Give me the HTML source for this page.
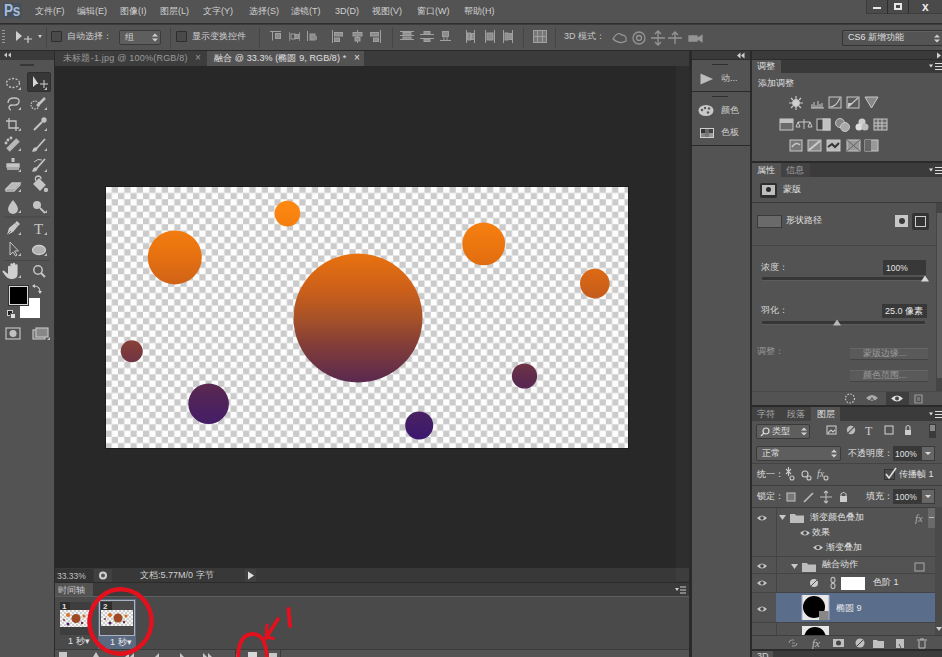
<!DOCTYPE html>
<html><head><meta charset="utf-8">
<style>
*{box-sizing:border-box;margin:0;padding:0}
html,body{width:942px;height:657px;overflow:hidden;background:#535353}
body{position:relative;font-family:"Liberation Sans",sans-serif;font-size:10px;color:#d0d0d0}
.a{position:absolute}
.t{position:absolute;white-space:nowrap;line-height:1}
</style></head><body>

<!-- MENU BAR -->
<div class="a" style="left:0;top:0;width:942px;height:24px;background:#535353"></div>
<div class="a" style="left:0;top:23px;width:942px;height:1px;background:#2e2e2e"></div><div class="a" style="left:0;top:24px;width:942px;height:1px;background:#3c3c3c"></div>

<!-- OPTIONS BAR -->
<div class="a" style="left:0;top:25px;width:942px;height:25px;background:#535353"></div>
<div class="a" style="left:0;top:50px;width:942px;height:1px;background:#2a2a2a"></div>

<!-- LEFT TOOLBAR -->
<div class="a" style="left:0;top:51px;width:54px;height:9px;background:#3a3a3a"></div>
<div class="a" style="left:0;top:60px;width:54px;height:597px;background:#535353"></div>
<div class="a" style="left:54px;top:51px;width:1px;height:606px;background:#2a2a2a"></div>

<!-- DOCUMENT AREA -->
<div class="a" style="left:55px;top:51px;width:634px;height:15px;background:#3b3b3b"></div>
<div class="a" style="left:55px;top:51px;width:152px;height:15px;background:#3d3d3d"></div>
<div class="a" style="left:207px;top:51px;width:157px;height:15px;background:#535353"></div>
<div class="a" style="left:55px;top:66px;width:634px;height:503px;background:#282828"></div>
<div class="a" style="left:676px;top:66px;width:13px;height:503px;background:#2e2e2e"></div>
<!-- status bar -->
<div class="a" style="left:55px;top:568px;width:634px;height:14px;background:#383838"></div>
<div class="a" style="left:55px;top:582px;width:634px;height:1px;background:#2a2a2a"></div>
<!-- timeline -->
<div class="a" style="left:55px;top:583px;width:634px;height:14px;background:#3b3b3b"></div>
<div class="a" style="left:55px;top:583px;width:38px;height:14px;background:#535353"></div>
<div class="a" style="left:55px;top:597px;width:634px;height:52px;background:#4a4a4a"></div>
<div class="a" style="left:55px;top:649px;width:634px;height:8px;background:#535353"></div>

<!-- separators -->
<div class="a" style="left:689px;top:51px;width:3px;height:606px;background:#2a2a2a"></div>
<div class="a" style="left:750px;top:51px;width:2px;height:606px;background:#2a2a2a"></div>

<!-- DOCK COLUMN -->
<div class="a" style="left:692px;top:51px;width:58px;height:8px;background:#3a3a3a"></div><div class="a" style="left:692px;top:59px;width:58px;height:1px;background:#2c2c2c"></div>
<div class="a" style="left:692px;top:60px;width:58px;height:597px;background:#535353"></div>
<div class="a" style="left:692px;top:91px;width:58px;height:1px;background:#2a2a2a"></div>
<div class="a" style="left:692px;top:145px;width:58px;height:1px;background:#2a2a2a"></div>

<!-- RIGHT PANELS -->
<div class="a" style="left:752px;top:51px;width:190px;height:8px;background:#3a3a3a"></div><div class="a" style="left:752px;top:59px;width:190px;height:1px;background:#2c2c2c"></div>
<!-- adjustments -->
<div class="a" style="left:752px;top:60px;width:190px;height:13px;background:#393939"></div><div class="a" style="left:781px;top:73px;width:161px;height:1px;background:#2e2e2e"></div>
<div class="a" style="left:752px;top:60px;width:29px;height:13px;background:#535353"></div>
<div class="a" style="left:752px;top:73px;width:190px;height:88px;background:#535353"></div>
<div class="a" style="left:752px;top:161px;width:190px;height:2px;background:#2a2a2a"></div>
<!-- properties -->
<div class="a" style="left:752px;top:163px;width:190px;height:14px;background:#3b3b3b"></div>
<div class="a" style="left:752px;top:163px;width:29px;height:14px;background:#535353"></div>
<div class="a" style="left:781px;top:163px;width:29px;height:14px;background:#424242"></div>
<div class="a" style="left:752px;top:177px;width:190px;height:228px;background:#535353"></div>
<div class="a" style="left:752px;top:202px;width:190px;height:1px;background:#3a3a3a"></div>
<div class="a" style="left:752px;top:405px;width:190px;height:2px;background:#2a2a2a"></div>
<!-- layers -->
<div class="a" style="left:752px;top:407px;width:190px;height:14px;background:#3b3b3b"></div>
<div class="a" style="left:752px;top:407px;width:29px;height:14px;background:#424242"></div>
<div class="a" style="left:781px;top:407px;width:30px;height:14px;background:#424242"></div>
<div class="a" style="left:811px;top:407px;width:29px;height:14px;background:#535353"></div>
<div class="a" style="left:752px;top:421px;width:190px;height:228px;background:#535353"></div>
<div class="a" style="left:752px;top:649px;width:190px;height:2px;background:#2a2a2a"></div>
<div class="a" style="left:752px;top:651px;width:190px;height:6px;background:#3b3b3b"></div>


<!-- MENU CONTENT -->
<div class="a" style="left:3px;top:3px;width:19px;height:15px;background:#46505a"></div>
<div class="t" style="left:4px;top:3px;font-size:16px;font-weight:bold;color:#a4bcdc;letter-spacing:-0.5px;transform:scaleX(0.85);transform-origin:0 0">Ps</div>
<div class="t" style="left:35px;top:7px;font-size:9px">文件(F)</div>
<div class="t" style="left:77px;top:7px;font-size:9px">编辑(E)</div>
<div class="t" style="left:120px;top:7px;font-size:9px">图像(I)</div>
<div class="t" style="left:160px;top:7px;font-size:9px">图层(L)</div>
<div class="t" style="left:203px;top:7px;font-size:9px">文字(Y)</div>
<div class="t" style="left:249px;top:7px;font-size:9px">选择(S)</div>
<div class="t" style="left:291px;top:7px;font-size:9px">滤镜(T)</div>
<div class="t" style="left:335px;top:7px;font-size:9px">3D(D)</div>
<div class="t" style="left:372px;top:7px;font-size:9px">视图(V)</div>
<div class="t" style="left:417px;top:7px;font-size:9px">窗口(W)</div>
<div class="t" style="left:464px;top:7px;font-size:9px">帮助(H)</div>
<!-- window buttons -->
<div class="a" style="left:866px;top:0;width:76px;height:14px;background:#4a4a4a;border-left:1px solid #3a3a3a;border-bottom:1px solid #3e3e3e"></div>
<div class="a" style="left:887px;top:0;width:1px;height:14px;background:#2e2e2e"></div>
<div class="a" style="left:908px;top:0;width:1px;height:14px;background:#2e2e2e"></div>
<div class="a" style="left:873px;top:7px;width:8px;height:2px;background:#e8e8e8"></div>
<div class="a" style="left:894px;top:3px;width:8px;height:7px;border:2px solid #e8e8e8"></div>
<div class="t" style="left:922px;top:1px;font-size:12px;font-weight:bold;color:#e8e8e8">x</div>

<!-- OPTIONS CONTENT -->
<div class="a" style="left:2px;top:30px;width:3px;height:15px;background:repeating-linear-gradient(#9a9a9a 0 1px,transparent 1px 3px)"></div>
<svg class="a" style="left:14px;top:29px" width="30" height="16"><path d="M2 2 L2 12 L8 7 Z" fill="#cfcfcf"/><path d="M10 10 h8 M14 7 v7" stroke="#cfcfcf" stroke-width="1.2"/><path d="M24 6 l4 0 l-2 3 z" fill="#cfcfcf"/></svg>
<div class="a" style="left:46px;top:27px;width:1px;height:21px;background:#454545"></div>
<div class="a" style="left:51px;top:31px;width:11px;height:11px;background:#4a4a4a;border:1px solid #2e2e2e;border-radius:1px"></div>
<div class="t" style="left:67px;top:32px;font-size:9px">自动选择：</div>
<div class="a" style="left:119px;top:30px;width:42px;height:15px;background:#5e5e5e;border:1px solid #3a3a3a;border-radius:2px"></div>
<div class="t" style="left:125px;top:33px;font-size:9px">组</div>
<svg class="a" style="left:152px;top:33px" width="6" height="9"><path d="M0 3.5 L3 0.5 L6 3.5Z M0 5.5 L3 8.5 L6 5.5Z" fill="#d0d0d0"/></svg>
<div class="a" style="left:170px;top:27px;width:1px;height:21px;background:#454545"></div>
<div class="a" style="left:176px;top:31px;width:11px;height:11px;background:#4a4a4a;border:1px solid #2e2e2e;border-radius:1px"></div>
<div class="t" style="left:192px;top:32px;font-size:9px">显示变换控件</div>
<div class="a" style="left:259px;top:27px;width:1px;height:21px;background:#454545"></div>
<svg class="a" style="left:0;top:25px" width="560" height="24" stroke="#a0a0a0" fill="#8c8c8c" stroke-width="1">
<!-- align top/vcenter/bottom -->
<path d="M270 6.5 h11 M272.5 6.5 v9"/><rect x="275.5" y="8.5" width="5" height="5"/>
<path d="M289.5 7 v9 M299.5 7 v9" stroke="#888"/><rect x="291" y="9" width="4" height="5" fill="none"/><rect x="295" y="9.5" width="4" height="4"/>
<path d="M307.5 6 v10"/><rect x="310" y="9" width="5" height="6"/><rect x="314" y="11" width="3" height="4" stroke="none"/>
<!-- align left/hcenter/right -->
<path d="M332.5 5 v13"/><rect x="334.5" y="7.5" width="8" height="3.5"/><rect x="334.5" y="13" width="5" height="3.5"/>
<path d="M357.5 5 v13"/><rect x="353" y="7.5" width="9" height="3.5"/><rect x="355" y="12.5" width="5" height="3.5"/>
<path d="M380.5 5 v13"/><rect x="370.5" y="7.5" width="8" height="3.5"/><rect x="373.5" y="13" width="5" height="3.5"/>
<!-- distribute top/vcenter/bottom -->
<path d="M400 6.5 h14 M400 10.5 h14 M400 14.5 h14"/><rect x="403" y="7.5" width="8" height="2.5"/><rect x="403" y="12" width="8" height="2.5"/>
<path d="M420 9.5 h14 M420 13.5 h14"/><rect x="424" y="6.5" width="6" height="2.5"/><rect x="424" y="14" width="6" height="2.5"/>
<path d="M440 15.5 h11"/><rect x="442.5" y="6.5" width="6" height="5"/><path d="M444 12 v3 M447 12 v3"/>
<!-- distribute left/hcenter/right -->
<path d="M466.5 5 v13 M474.5 5 v13"/><rect x="467.5" y="8" width="3" height="7"/><rect x="471.5" y="8.5" width="3" height="6"/>
<path d="M485.5 5 v13 M494.5 5 v13"/><rect x="487" y="8" width="6" height="7"/>
<path d="M503.5 5 v13 M512.5 5 v13"/><rect x="505" y="8" width="3" height="7"/><rect x="509" y="8.5" width="3" height="6"/>
<!-- auto align -->
<rect x="533.5" y="5.5" width="13" height="12" fill="#777"/><path d="M537.5 5 v13 M542.5 5 v13 M533 11.5 h14"/>
</svg>
<div class="a" style="left:392px;top:27px;width:1px;height:21px;background:#454545"></div>
<div class="a" style="left:523px;top:27px;width:1px;height:21px;background:#454545"></div>
<div class="a" style="left:555px;top:27px;width:1px;height:21px;background:#454545"></div>
<div class="t" style="left:564px;top:32px;font-size:9px;color:#c8c8c8">3D 模式：</div>
<svg class="a" style="left:610px;top:29px" width="96" height="18" stroke="#959595" fill="none" stroke-width="1.3">
<path d="M3 10 q4 -8 9 -4 q5 0 4 6 q-6 4 -13 -2z"/>
<circle cx="29" cy="9" r="6"/><circle cx="29" cy="9" r="2.5"/>
<path d="M48 2 v14 M41 9 h14 M45 5 l3 -3 l3 3 M45 13 l3 3 l3 -3"/>
<path d="M58 9 h14 M65 3 v12 M62 6 l3 -3 l3 3"/>
<path d="M79 7 h8 v5 h-8z M87 9.5 l5 -3 v6z" fill="#959595"/>
</svg>
<div class="a" style="left:842px;top:30px;width:100px;height:16px;background:#545454;border:1px solid #333;border-right:none;border-radius:2px 0 0 2px;box-shadow:inset 0 1px 0 #606060"></div>
<div class="t" style="left:848px;top:33px;font-size:9px;color:#e0e0e0">CS6 新增功能</div>
<svg class="a" style="left:934px;top:34px" width="6" height="9"><path d="M0 3.5 L3 0.5 L6 3.5Z M0 5.5 L3 8.5 L6 5.5Z" fill="#d0d0d0"/></svg>

<!-- TABS -->
<div class="t" style="left:63px;top:54px;font-size:9px;color:#9a9a9a;letter-spacing:0.22px">未标题-1.jpg @ 100%(RGB/8)</div>
<div class="t" style="left:195px;top:53px;font-size:10px;color:#9a9a9a">×</div>
<div class="t" style="left:214px;top:54px;font-size:9px;color:#e0e0e0;letter-spacing:0.1px">融合 @ 33.3% (椭圆 9, RGB/8) *</div>
<div class="t" style="left:354px;top:53px;font-size:10px;color:#e0e0e0">×</div>


<!-- TOOLBAR CONTENT -->
<svg class="a" style="left:0;top:51px" width="54" height="300">
<g fill="#c9c9c9"><path d="M4 4 l3 -2.5 v5z M8 4 l3 -2.5 v5z"/></g>
<path d="M20 14 h14" stroke="#2e2e2e" stroke-width="1.5"/>
<path d="M0 1 h54" stroke="#3a3a3a"/>
</svg>
<div class="a" style="left:27px;top:72px;width:24px;height:20px;background:#383838;border:1px solid #2e2e2e;border-radius:2px"></div>
<svg class="a" style="left:0;top:0" width="54" height="350" fill="none" stroke="#c4c4c4" stroke-width="1.3">
<!-- marquee -->
<ellipse cx="13" cy="83" rx="6.5" ry="4.5" stroke-dasharray="2 1.5"/>
<!-- move -->
<path d="M33 76 v11 l3.5 -3 l2 0 z" fill="#d8d8d8" stroke="none"/>
<path d="M40 84 h8 M44 80 v8" stroke="#d0d0d0" stroke-width="1"/>
<!-- lasso -->
<path d="M8 103 q0 -5 6 -5 q6 0 5 4 q-1 4 -7 3 q-3 0 -3 3 q1 2 2 2"/>
<!-- quick select -->
<circle cx="35" cy="105" r="4" stroke-dasharray="1.5 1.2"/>
<path d="M37 106 l8 -8" stroke-width="2.5"/>
<!-- crop -->
<path d="M9 118 v10 h10 M6 121 h10 v10"/>
<!-- eyedropper -->
<path d="M34 130 l8 -8" stroke-width="2"/><circle cx="44" cy="120" r="2" fill="#c4c4c4"/>
<!-- heal -->
<path d="M8 150 l10 -10" stroke-width="5" stroke="#b8b8b8"/>
<circle cx="8" cy="140" r="0.8" fill="#c4c4c4"/><circle cx="6" cy="143" r="0.8" fill="#c4c4c4"/><circle cx="11" cy="138" r="0.8" fill="#c4c4c4"/>
<!-- brush -->
<path d="M37 148 l8 -9" stroke-width="1.8"/><path d="M33 151 q1 -4 4 -3 q0 3 -4 3z" fill="#c4c4c4"/>
<!-- stamp -->
<path d="M13 158 v4" stroke-width="3"/><path d="M7 164 h12 v3 h-12z M7 169 h12" fill="#c4c4c4"/>
<!-- history brush -->
<path d="M37 168 l8 -9" stroke-width="1.8"/><path d="M33 171 q1 -4 4 -3 q0 3 -4 3z" fill="#c4c4c4"/><path d="M34 162 q4 -4 8 -2" stroke-width="1"/>
<!-- eraser -->
<path d="M6 189 l6 -6 h8 l-6 6z" fill="#b8b8b8"/><path d="M6 189 v2 h8 l6 -6 v-2"/>
<!-- bucket -->
<path d="M34 184 l5 -5 l6 6 l-5 5z" fill="#c4c4c4"/><path d="M36 181 q-2 -4 2 -5 q3 0 3 3"/><circle cx="46" cy="190" r="1.5" fill="#c4c4c4"/>
<!-- blur drop -->
<path d="M13 200 q-5 6 -5 9 a5 5 0 0 0 10 0 q0 -3 -5 -9z" fill="#c4c4c4" stroke="none"/>
<!-- dodge -->
<circle cx="37" cy="205" r="4" fill="#c4c4c4" stroke="none"/><path d="M40 208 l5 5" stroke-width="1.8"/>
<path d="M4 217 h46" stroke="#474747" stroke-width="1"/>
<!-- pen -->
<path d="M7 235 l2 -7 l6 -5 l3 3 l-5 6z" fill="#c8c8c8" stroke="none"/><path d="M7 235 l4 -4" stroke="#555" stroke-width="0.8"/><path d="M15 223 l2 -2 l3 3 l-2 2z" fill="#c8c8c8" stroke="none"/>
<!-- type -->
<text x="34" y="234" font-family="Liberation Serif" font-size="15" fill="#c8c8c8" stroke="none">T</text>
<!-- path select -->
<path d="M10 242 v13 l3 -3 l2.5 4 l1.5 -1 l-2.5 -4 l4 0 z" stroke-width="1"/>
<!-- ellipse shape -->
<ellipse cx="39" cy="250" rx="6.5" ry="4.5" fill="#b0b0b0" stroke="#cfcfcf"/>
<path d="M4 260.5 h46" stroke="#474747" stroke-width="1"/>
<!-- hand -->
<path d="M8 274 v-7 q0 -1.2 1.2 -1.2 q1.2 0 1.2 1.2 v4 v-6.5 q0 -1.2 1.2 -1.2 q1.2 0 1.2 1.2 v6.5 v-7 q0 -1.2 1.2 -1.2 q1.2 0 1.2 1.2 v7 v-5.5 q0 -1.2 1.2 -1.2 q1.2 0 1.2 1.2 v8 q0 5 -5 5.5 h-2 q-3 0 -5 -3 l-3 -4 q-0.5 -1.2 0.8 -1.6 q1 0 2 1.5z" fill="#d0d0d0" stroke="none"/>
<!-- zoom -->
<circle cx="38" cy="270" r="4.2" stroke-width="1.5"/><path d="M41 273 l4 4" stroke-width="2"/>
</svg>
<svg class="a" style="left:0;top:0" width="54" height="350" fill="#bdbdbd">
<path d="M18 90 l3 0 l0 -3z M44 90 l3 0 l0 -3z M18 110 l3 0 l0 -3z M44 110 l3 0 l0 -3z M18 131 l3 0 l0 -3z M44 131 l3 0 l0 -3z M18 151 l3 0 l0 -3z M44 151 l3 0 l0 -3z M18 172 l3 0 l0 -3z M44 172 l3 0 l0 -3z M18 192 l3 0 l0 -3z M44 192 l3 0 l0 -3z M18 213 l3 0 l0 -3z M44 213 l3 0 l0 -3z M18 235 l3 0 l0 -3z M44 235 l3 0 l0 -3z M18 256 l3 0 l0 -3z M44 256 l3 0 l0 -3z M18 278 l3 0 l0 -3z"/>
</svg>
<!-- colors -->
<div class="a" style="left:20px;top:298px;width:20px;height:20px;background:#fff;"></div>
<div class="a" style="left:9px;top:286px;width:19px;height:19px;background:#000;border:1px solid #d8d8d8;box-shadow:0 0 0 1px #333"></div>
<svg class="a" style="left:32px;top:283px" width="12" height="12" stroke="#cfcfcf" fill="none" stroke-width="1.2"><path d="M2 3 q6 0 6 6"/><path d="M0 3 l3 -2 v4z M8 11 l-2 -3 h4z" fill="#cfcfcf" stroke="none"/></svg>
<svg class="a" style="left:7px;top:310px" width="10" height="10"><rect x="0.5" y="0.5" width="5" height="5" fill="#222" stroke="#ccc" stroke-width="1"/><rect x="3.5" y="3.5" width="5" height="5" fill="#ddd" stroke="#555"/></svg>
<svg class="a" style="left:4px;top:326px" width="48" height="16" stroke="#c0c0c0" fill="none" stroke-width="1.2">
<rect x="2" y="2" width="14" height="11"/><circle cx="9" cy="7.5" r="3" fill="#c0c0c0"/>
<rect x="29" y="4" width="12" height="9" fill="#777"/><rect x="32" y="2" width="12" height="9" fill="#888"/>
<path d="M43 14 l3 0 l0 -3z" fill="#bdbdbd" stroke="none"/>
</svg>


<!-- STATUS BAR CONTENT -->
<div class="a" style="left:55px;top:569px;width:38px;height:13px;background:#333"></div>
<div class="t" style="left:57px;top:572px;font-size:8.5px;color:#c0c0c0">33.33%</div>
<div class="a" style="left:94px;top:569px;width:18px;height:13px;background:#404040"></div>
<svg class="a" style="left:97px;top:570px" width="12" height="11"><circle cx="6" cy="5.5" r="4" fill="#cfcfcf"/><circle cx="6" cy="5.5" r="2" fill="#555"/></svg>
<div class="t" style="left:140px;top:571px;font-size:9px;color:#d0d0d0">文档:5.77M/0 字节</div>
<div class="a" style="left:245px;top:569px;width:11px;height:13px;background:#404040"></div>
<svg class="a" style="left:247px;top:571px" width="8" height="9"><path d="M1 0.5 L7 4.5 L1 8.5Z" fill="#e0e0e0"/></svg>
<div class="a" style="left:676px;top:568px;width:13px;height:13px;background:#3d3d3d"></div>

<!-- TIMELINE CONTENT -->
<div class="t" style="left:58px;top:586px;font-size:9px;color:#c8c8c8">时间轴</div>
<div class="a" style="left:55px;top:596px;width:634px;height:1px;background:#5e5e5e"></div>
<svg class="a" style="left:674px;top:585px" width="14" height="10"><path d="M1 3 h4 l-2 3z" fill="#ccc"/><path d="M6 2 h6 M6 5 h6 M6 8 h6" stroke="#ccc" stroke-width="1"/></svg>
<!-- frame 1 -->
<div class="a" style="left:60px;top:602px;width:31px;height:33px;background:#3e3e3e"></div>
<div class="a" style="left:60px;top:602px;width:10px;height:8px;background:#2e2e2e"></div>
<div class="t" style="left:62px;top:603px;font-size:8px;font-weight:bold;color:#e0e0e0">1</div>
<div class="a" style="left:60px;top:610px;width:31px;height:17px;background:repeating-conic-gradient(#cfcfcf 0 25%,#f4f4f4 0 50%) 0 0/4px 4px"></div>
<svg class="a" style="left:60px;top:610px" width="31" height="17"><circle cx="16" cy="8.5" r="4.5" fill="#a04a24"/><circle cx="8" cy="5" r="2" fill="#d87020"/><circle cx="24" cy="6" r="1.5" fill="#d87020"/><circle cx="8" cy="14" r="1.5" fill="#4a2060"/><circle cx="22" cy="13" r="1.2" fill="#6a2a48"/><circle cx="4" cy="10" r="1" fill="#803838"/></svg>
<div class="t" style="left:68px;top:637px;font-size:9px;color:#e0e0e0">1 秒▾</div>
<!-- frame 2 -->
<div class="a" style="left:98px;top:599px;width:38px;height:50px;background:#5a6880"></div>
<div class="a" style="left:99px;top:600px;width:36px;height:36px;background:#4a4a4a;border:1px solid #a8b4c4"></div>
<div class="a" style="left:101px;top:602px;width:11px;height:8px;background:#2e2e2e"></div>
<div class="t" style="left:103px;top:603px;font-size:8px;font-weight:bold;color:#e0e0e0">2</div>
<div class="a" style="left:101px;top:610px;width:32px;height:16px;background:repeating-conic-gradient(#cfcfcf 0 25%,#f4f4f4 0 50%) 0 0/4px 4px"></div>
<svg class="a" style="left:101px;top:610px" width="32" height="16"><circle cx="17" cy="8" r="4.5" fill="#a04a24"/><circle cx="9" cy="5" r="2" fill="#d87020"/><circle cx="25" cy="6" r="1.5" fill="#d87020"/><circle cx="9" cy="13" r="1.5" fill="#4a2060"/><circle cx="23" cy="12" r="1.2" fill="#6a2a48"/><circle cx="4" cy="9" r="1" fill="#803838"/></svg>
<div class="t" style="left:110px;top:638px;font-size:9px;color:#e8e8e8">1 秒▾</div>
<!-- timeline bottom toolbar -->
<div class="a" style="left:55px;top:649px;width:634px;height:1px;background:#3a3a3a"></div>
<svg class="a" style="left:55px;top:649px" width="300" height="8" fill="#c8c8c8">
<rect x="4" y="3" width="8" height="5"/>
<path d="M38 8 l3 -5 l3 5z"/>
<path d="M70 8 l4 -4 v4z M75 8 l4 -4 v4z"/>
<path d="M100 8 l4 -4 v4z"/>
<path d="M125 4 l4 4 h-4z"/>
<path d="M148 4 l4 4 h-4z M153 4 l4 4 h-4z"/>
<path d="M180 4 l4 4 h-4z"/>
<rect x="193" y="3" width="9" height="5" fill="#d8d8d8"/>
<rect x="214" y="4" width="8" height="4"/>
</svg>
<div class="a" style="left:235px;top:650px;width:1px;height:7px;background:#3a3a3a"></div>
<div class="a" style="left:280px;top:650px;width:1px;height:7px;background:#3a3a3a"></div>

<!-- DOCK CONTENT -->
<div class="a" style="left:712px;top:64px;width:16px;height:1px;background:#2e2e2e"></div>
<svg class="a" style="left:700px;top:73px" width="14" height="12"><path d="M0.5 0.5 L13 6 L0.5 11.5Z" fill="#bdbdbd"/></svg>
<div class="t" style="left:721px;top:74px;font-size:9px">动...</div>
<div class="a" style="left:712px;top:96px;width:16px;height:1px;background:#2e2e2e"></div>
<svg class="a" style="left:698px;top:104px" width="16" height="13"><ellipse cx="8" cy="6.5" rx="7.5" ry="5.5" fill="#c8c8c8"/><circle cx="4" cy="6" r="1.2" fill="#555"/><circle cx="7" cy="4" r="1.2" fill="#555"/><circle cx="11" cy="4.5" r="1.2" fill="#555"/><circle cx="10" cy="8.5" r="1.2" fill="#555"/></svg>
<div class="t" style="left:721px;top:106px;font-size:9px">颜色</div>
<svg class="a" style="left:700px;top:128px" width="14" height="10"><rect x="0" y="0" width="14" height="10" fill="#cfcfcf"/><rect x="1" y="1" width="4" height="4" fill="#333"/><rect x="5" y="1" width="4" height="4" fill="#666"/><rect x="9" y="1" width="4" height="4" fill="#444"/><rect x="1" y="5" width="4" height="4" fill="#888"/><rect x="5" y="5" width="4" height="4" fill="#777"/><rect x="9" y="5" width="4" height="4" fill="#999"/></svg>
<div class="t" style="left:721px;top:128px;font-size:9px">色板</div>
<svg class="a" style="left:737px;top:52px" width="10" height="7" fill="#d0d0d0"><path d="M0 3.5 l3.5 -3 v6z M4 3.5 l3.5 -3 v6z"/></svg>
<svg class="a" style="left:935px;top:52px" width="7" height="7" fill="#d0d0d0"><path d="M2 0.5 l4 3 l-4 3z"/></svg>


<!-- ADJUSTMENTS CONTENT -->
<div class="t" style="left:757px;top:62px;font-size:9px;color:#e0e0e0">调整</div>
<svg class="a" style="left:929px;top:62px" width="13" height="9"><path d="M0 2.5 h4 l-2 3z" fill="#ddd"/><path d="M6 1.5 h7 M6 4.5 h7 M6 7.5 h7" stroke="#ddd" stroke-width="1"/></svg>
<div class="t" style="left:758px;top:79px;font-size:9px;color:#e0e0e0">添加调整</div>
<svg class="a" style="left:752px;top:73px" width="190" height="88" stroke="#c8c8c8" fill="none" stroke-width="1">
<!-- row1 y~30 -->
<circle cx="44" cy="30" r="3.5" fill="#d0d0d0"/><path d="M44 23 v3 M44 34 v3 M37 30 h3 M48 30 h3 M39 25 l2 2 M47 33 l2 2 M49 25 l-2 2 M39 35 l2 -2" stroke-width="1.2"/>
<path d="M59 35 h13 M60 35 v-4 M62 35 v-6 M64 35 v-3 M66 35 v-7 M68 35 v-4 M70 35 v-5" stroke="#c8c8c8"/>
<rect x="77" y="24" width="12" height="11" fill="#5a5a5a"/><path d="M78 34 q6 0 10 -9" stroke-width="1.2"/>
<rect x="95" y="24" width="12" height="11" fill="#5a5a5a"/><path d="M96 34 l10 -9" stroke-width="1.2"/><path d="M96 35 l0 -5 l5 0z" fill="#c8c8c8" stroke="none"/>
<path d="M113 24 h13 l-6.5 11z" fill="#888"/>
<!-- row2 y~52 -->
<rect x="28" y="46" width="13" height="11" fill="#6a6a6a"/><rect x="28" y="46" width="13" height="4" fill="#c0c0c0" stroke="none"/>
<path d="M52 46 v10 M46 49 h12 M46 49 l-2 5 h4z M58 49 l-2 5 h4z" stroke-width="1"/>
<rect x="65" y="46" width="13" height="11" fill="#444"/><rect x="71" y="46" width="7" height="11" fill="#c0c0c0"/>
<circle cx="88" cy="50" r="4.5" fill="#888"/><circle cx="93" cy="54" r="4.5" fill="#aaa"/>
<circle cx="110" cy="49" r="3.5" fill="#ccc" stroke="none"/><circle cx="107" cy="54" r="3.5" fill="#ddd" stroke="none"/><circle cx="113" cy="54" r="3.5" fill="#bbb" stroke="none"/>
<rect x="122" y="46" width="13" height="11" fill="#6a6a6a"/><path d="M122 50 h13 M122 53 h13 M126 46 v11 M130 46 v11"/>
<!-- row3 y~72 -->
<rect x="38" y="67" width="12" height="11" fill="#777"/><path d="M40 74 q4 -6 8 -2" stroke-width="1.5"/>
<rect x="56" y="67" width="13" height="11" fill="#888"/><path d="M57 77 l11 -9" stroke="#ccc" stroke-width="2"/>
<rect x="75" y="67" width="13" height="11" fill="#bbb"/><path d="M76 74 l4 -3 l3 3 l4 -4" stroke="#333" stroke-width="2"/>
<rect x="95" y="67" width="13" height="11" fill="#999"/><path d="M95 67 l13 11 M108 67 l-13 11" stroke="#666"/>
<rect x="113" y="67" width="13" height="11" fill="#999"/><rect x="113" y="67" width="6" height="11" fill="#666" stroke="none"/>
</svg>

<!-- PROPERTIES CONTENT -->
<div class="t" style="left:757px;top:166px;font-size:9px;color:#e0e0e0">属性</div>
<div class="t" style="left:786px;top:166px;font-size:9px;color:#a8a8a8">信息</div>
<svg class="a" style="left:929px;top:166px" width="13" height="9"><path d="M0 2.5 h4 l-2 3z" fill="#ddd"/><path d="M6 1.5 h7 M6 4.5 h7 M6 7.5 h7" stroke="#ddd" stroke-width="1"/></svg>
<div class="a" style="left:760px;top:183px;width:17px;height:15px;background:#2e2e2e;border-radius:2px"></div>
<div class="a" style="left:762px;top:185px;width:13px;height:10px;background:#bdbdbd"></div>
<div class="a" style="left:766px;top:187px;width:5px;height:5px;background:#2a2a2a;border-radius:50%"></div>
<div class="t" style="left:783px;top:185px;font-size:9px;color:#e0e0e0">蒙版</div>
<div class="a" style="left:757px;top:215px;width:25px;height:13px;background:#6a6a6a;border:1px solid #3a3a3a"></div>
<div class="t" style="left:786px;top:216px;font-size:9px;color:#e0e0e0">形状路径</div>
<div class="a" style="left:895px;top:215px;width:13px;height:12px;background:#c8c8c8"></div>
<div class="a" style="left:899px;top:218px;width:6px;height:6px;background:#3a3a3a;border-radius:50%"></div>
<div class="a" style="left:912px;top:213px;width:17px;height:17px;background:#333;border-radius:2px"></div>
<div class="a" style="left:915px;top:216px;width:11px;height:11px;border:1px solid #ccc"></div>
<div class="a" style="left:752px;top:245px;width:184px;height:1px;background:#464646"></div>
<div class="a" style="left:936px;top:203px;width:6px;height:188px;background:#454545"></div>
<div class="a" style="left:937px;top:213px;width:5px;height:165px;background:#5e5e5e"></div>
<div class="t" style="left:761px;top:263px;font-size:9px;color:#d8d8d8">浓度：</div>
<div class="a" style="left:883px;top:260px;width:43px;height:15px;background:#383838"></div>
<div class="t" style="left:886px;top:264px;font-size:8.5px;color:#e0e0e0">100%</div>
<div class="a" style="left:762px;top:277px;width:163px;height:3px;background:#363636;border-radius:1px"></div><div class="a" style="left:762px;top:280px;width:163px;height:1px;background:#5c5c5c"></div>
<svg class="a" style="left:920px;top:275px" width="10" height="7"><path d="M1 6.5 L5 0.5 L9 6.5Z" fill="#d8d8d8"/></svg>
<div class="t" style="left:761px;top:306px;font-size:9px;color:#d8d8d8">羽化：</div>
<div class="a" style="left:882px;top:304px;width:45px;height:14px;background:#383838"></div>
<div class="t" style="left:885px;top:307px;font-size:9px;color:#e8e8e8">25.0 像素</div>
<div class="a" style="left:762px;top:321px;width:163px;height:3px;background:#363636;border-radius:1px"></div><div class="a" style="left:762px;top:324px;width:163px;height:1px;background:#5c5c5c"></div>
<svg class="a" style="left:832px;top:319px" width="10" height="7"><path d="M1 6.5 L5 0.5 L9 6.5Z" fill="#b8b8b8"/></svg>
<div class="t" style="left:757px;top:347px;font-size:9px;color:#9a9a9a">调整：</div>
<div class="a" style="left:850px;top:348px;width:78px;height:12px;background:#5a5a5a;border-top:1px solid #666;border-bottom:1px solid #444"></div>
<div class="t" style="left:863px;top:349px;font-size:9px;color:#9c9c9c">蒙版边缘...</div>
<div class="a" style="left:850px;top:370px;width:78px;height:12px;background:#5a5a5a;border-top:1px solid #666;border-bottom:1px solid #444"></div>
<div class="t" style="left:863px;top:371px;font-size:9px;color:#9c9c9c">颜色范围...</div>
<div class="a" style="left:752px;top:391px;width:190px;height:1px;background:#4a4a4a"></div>
<div class="a" style="left:886px;top:392px;width:23px;height:13px;background:#3e3e3e"></div>
<svg class="a" style="left:752px;top:392px" width="190" height="13" fill="none" stroke="#c8c8c8" stroke-width="1.2">
<circle cx="98" cy="6.5" r="4.5" stroke-dasharray="1.5 1.5"/>
<path d="M114 6 q6 -6 12 0 q-6 6 -12 0z" fill="#aaa" stroke="none"/><path d="M118 9 l2 -3 l2 3" stroke="#555"/>
<path d="M139 6.5 q6 -6 12 0 q-6 6 -12 0z" fill="#ddd" stroke="none"/><circle cx="145" cy="6.5" r="2" fill="#444" stroke="none"/>
<path d="M163 3 h7 v8 h-7z M165 6 h3 M165 8 h3" stroke="#999"/>
</svg>

<!-- LAYERS CONTENT -->
<div class="t" style="left:757px;top:410px;font-size:9px;color:#a8a8a8">字符</div>
<div class="t" style="left:787px;top:410px;font-size:9px;color:#a8a8a8">段落</div>
<div class="t" style="left:817px;top:410px;font-size:9px;color:#e0e0e0">图层</div>
<svg class="a" style="left:929px;top:410px" width="13" height="9"><path d="M0 2.5 h4 l-2 3z" fill="#ddd"/><path d="M6 1.5 h7 M6 4.5 h7 M6 7.5 h7" stroke="#ddd" stroke-width="1"/></svg>
<div class="a" style="left:756px;top:424px;width:54px;height:15px;background:#5e5e5e;border:1px solid #3a3a3a;border-radius:2px"></div>
<svg class="a" style="left:760px;top:427px" width="10" height="10" stroke="#ddd" fill="none" stroke-width="1.2"><circle cx="6" cy="4" r="3"/><path d="M4 6 l-3 3"/></svg>
<div class="t" style="left:772px;top:427px;font-size:9px;color:#e0e0e0">类型</div>
<svg class="a" style="left:801px;top:427px" width="6" height="9"><path d="M0 3.5 L3 0.5 L6 3.5Z M0 5.5 L3 8.5 L6 5.5Z" fill="#d0d0d0"/></svg>
<svg class="a" style="left:752px;top:421px" width="190" height="20" stroke="#c8c8c8" fill="none" stroke-width="1.1">
<rect x="75" y="5" width="9" height="8"/><path d="M76 12 l3 -3 l2 2 l2 -2" />
<circle cx="99" cy="9" r="4.2" fill="#bbb" stroke="none"/><path d="M96 12 l6 -6" stroke="#555"/>
<text x="113" y="14" font-family="Liberation Serif" font-size="12" fill="#d0d0d0" stroke="none">T</text>
<rect x="133" y="5" width="8" height="8"/>
<path d="M153 14 v-5 h6 v5z" fill="#ccc" stroke="none"/><path d="M154 9 v-3 q2 -3 4 0 v3"/>
<rect x="177" y="3" width="7" height="14" fill="#3a3a3a" stroke="none"/><rect x="178" y="4" width="5" height="6" fill="#888" stroke="none"/>
</svg>
<div class="a" style="left:756px;top:446px;width:85px;height:15px;background:#5e5e5e;border:1px solid #3a3a3a;border-radius:2px"></div>
<div class="t" style="left:762px;top:449px;font-size:9px;color:#e0e0e0">正常</div>
<svg class="a" style="left:831px;top:449px" width="6" height="9"><path d="M0 3.5 L3 0.5 L6 3.5Z M0 5.5 L3 8.5 L6 5.5Z" fill="#d0d0d0"/></svg>
<div class="t" style="left:848px;top:449px;font-size:9px;color:#e0e0e0">不透明度：</div>
<div class="a" style="left:893px;top:446px;width:28px;height:15px;background:#383838"></div>
<div class="t" style="left:895px;top:450px;font-size:8.5px;color:#e0e0e0">100%</div>
<div class="a" style="left:921px;top:446px;width:14px;height:15px;background:#666;border:1px solid #3a3a3a"></div>
<svg class="a" style="left:925px;top:452px" width="6" height="4"><path d="M0 0 h6 l-3 3z" fill="#ddd"/></svg>
<div class="t" style="left:757px;top:470px;font-size:9px;color:#e0e0e0">统一：</div>
<svg class="a" style="left:783px;top:466px" width="50" height="16" stroke="#c8c8c8" fill="none" stroke-width="1.1">
<path d="M3 3 l5 5 M8 3 l-5 5 M5.5 1 v9"/><circle cx="9" cy="12" r="2"/>
<circle cx="22" cy="8" r="3"/><circle cx="26" cy="12" r="2"/>
<text x="34" y="11" font-family="Liberation Serif" font-style="italic" font-size="10" fill="#c8c8c8" stroke="none">fx</text><circle cx="43" cy="12" r="2"/>
</svg>
<div class="a" style="left:884px;top:469px;width:11px;height:11px;background:#4a4a4a;border:1px solid #333"></div>
<svg class="a" style="left:884px;top:466px" width="14" height="14"><path d="M2 8 l3 4 l7 -10" stroke="#e0e0e0" stroke-width="1.6" fill="none"/></svg>
<div class="t" style="left:899px;top:470px;font-size:9px;color:#e0e0e0">传播帧 1</div>
<div class="a" style="left:752px;top:463px;width:190px;height:1px;background:#434343"></div>
<div class="a" style="left:752px;top:485px;width:190px;height:1px;background:#3e3e3e"></div>
<div class="t" style="left:757px;top:492px;font-size:9px;color:#e0e0e0">锁定：</div>
<svg class="a" style="left:783px;top:489px" width="70" height="16" stroke="#bdbdbd" fill="none" stroke-width="1.1">
<rect x="4" y="4" width="8" height="8" fill="#777"/>
<path d="M21 13 l9 -9" stroke-width="1.6"/>
<path d="M43 2 v12 M37 8 h12 M41 4 l2 -2 l2 2 M41 12 l2 2 l2 -2"/>
<rect x="57" y="7" width="7" height="6" fill="#ccc" stroke="none"/><path d="M58 7 v-2 q2.5 -3 5 0 v2"/>
</svg>
<div class="t" style="left:866px;top:492px;font-size:9px;color:#e0e0e0">填充：</div>
<div class="a" style="left:893px;top:489px;width:28px;height:15px;background:#383838"></div>
<div class="t" style="left:895px;top:493px;font-size:8.5px;color:#e0e0e0">100%</div>
<div class="a" style="left:921px;top:489px;width:14px;height:15px;background:#666;border:1px solid #3a3a3a"></div>
<svg class="a" style="left:925px;top:495px" width="6" height="4"><path d="M0 0 h6 l-3 3z" fill="#ddd"/></svg>
<div class="a" style="left:752px;top:507px;width:190px;height:1px;background:#3e3e3e"></div>
<!-- layer list -->
<div class="a" style="left:776px;top:508px;width:1px;height:127px;background:#444"></div>
<div class="a" style="left:752px;top:556px;width:184px;height:1px;background:#444"></div>
<div class="a" style="left:752px;top:573px;width:184px;height:1px;background:#444"></div>
<div class="a" style="left:752px;top:592px;width:184px;height:1px;background:#444"></div>
<div class="a" style="left:776px;top:593px;width:160px;height:29px;background:#5a6e8c"></div>
<div class="a" style="left:752px;top:622px;width:184px;height:1px;background:#444"></div>
<div class="a" style="left:935px;top:507px;width:7px;height:128px;background:#4a4a4a"></div>
<div class="a" style="left:928px;top:508px;width:7px;height:20px;background:#6a6a6a;border-radius:1px"></div>
<div class="a" style="left:929px;top:517px;width:5px;height:1px;background:#bbb"></div>
<svg class="a" style="left:936px;top:627px" width="6" height="5"><path d="M0 0 h6 l-3 4z" fill="#ccc"/></svg>
<svg class="a" style="left:752px;top:507px" width="184" height="128" fill="#c8c8c8">
<!-- eyes -->
<path d="M5 11 q5 -5 10 0 q-5 5 -10 0z"/><circle cx="10" cy="11" r="1.8" fill="#444"/>
<path d="M5 59 q5 -5 10 0 q-5 5 -10 0z"/><circle cx="10" cy="59" r="1.8" fill="#444"/>
<path d="M5 76 q5 -5 10 0 q-5 5 -10 0z"/><circle cx="10" cy="76" r="1.8" fill="#444"/>
<path d="M5 102 q5 -5 10 0 q-5 5 -10 0z"/><circle cx="10" cy="102" r="1.8" fill="#444"/>
<path d="M48 26 q5 -5 10 0 q-5 5 -10 0z"/><circle cx="53" cy="26" r="1.8" fill="#444"/>
<path d="M61 40.5 q5 -5 10 0 q-5 5 -10 0z"/><circle cx="66" cy="40.5" r="1.8" fill="#444"/>
<!-- group 1 -->
<path d="M27 8 h7 l-3.5 5z"/>
<path d="M38 7 h5 l1 1.5 h8 v7.5 h-14z" fill="#bdbdbd"/>
<text x="163" y="15" font-family="Liberation Serif" font-style="italic" font-size="11" fill="#aaa">fx</text>
<!-- group 2 -->
<path d="M39 57 h7 l-3.5 5z"/>
<path d="M50 56 h5 l1 1.5 h8 v7.5 h-14z" fill="#bdbdbd"/>
<rect x="163" y="56" width="9" height="8" fill="none" stroke="#aaa"/>
<!-- levels -->
<circle cx="62" cy="76" r="4" fill="#ccc"/><path d="M59 79 l6 -6" stroke="#555" stroke-width="1"/>
<ellipse cx="81" cy="73" rx="2" ry="2.6" stroke="#bbb" fill="none" stroke-width="1.1"/><ellipse cx="81" cy="79" rx="2" ry="2.6" stroke="#bbb" fill="none" stroke-width="1.1"/>
<rect x="89" y="70" width="24" height="13" fill="#fff"/>
<!-- ellipse thumb -->
<rect x="50" y="88" width="27" height="25" fill="#e8e8e8"/>
<circle cx="62" cy="100" r="11" fill="#000"/>
<rect x="67" y="104" width="10" height="9" fill="#888"/>
<path d="M50 88 v25 M77 88 v25" stroke="#aac" stroke-width="1"/>
<rect x="50" y="119" width="27" height="9" fill="#e8e8e8"/>
<circle cx="63" cy="131" r="11" fill="#000"/>
</svg>
<div class="t" style="left:810px;top:513px;font-size:9px;color:#e0e0e0">渐变颜色叠加</div>
<div class="t" style="left:812px;top:528px;font-size:9px;color:#e0e0e0">效果</div>
<div class="t" style="left:826px;top:543px;font-size:9px;color:#e0e0e0">渐变叠加</div>
<div class="t" style="left:822px;top:560px;font-size:9px;color:#e0e0e0">融合动作</div>
<div class="t" style="left:873px;top:578px;font-size:9px;color:#e0e0e0">色阶 1</div>
<div class="t" style="left:836px;top:604px;font-size:9px;color:#e8e8e8">椭圆 9</div>
<!-- layers bottom toolbar -->
<div class="a" style="left:752px;top:635px;width:190px;height:1px;background:#3e3e3e"></div>
<svg class="a" style="left:752px;top:636px" width="190" height="13" fill="#c0c0c0" stroke="#c0c0c0" stroke-width="1">
<path d="M37 7 q0 -3 3 -3 h2 M45 7 q0 3 -3 3 h-2 M40 7 h3" fill="none" stroke="#999"/>
<text x="60" y="11" font-family="Liberation Serif" font-style="italic" font-size="11" stroke="none">fx</text>
<rect x="81" y="3" width="11" height="8" stroke="none"/><circle cx="86.5" cy="7" r="2.5" fill="#444" stroke="none"/>
<circle cx="108" cy="7" r="4.5" stroke="none"/><path d="M105 10 l6 -6" stroke="#444"/>
<path d="M121 4 h4 l1 1 h6 v7 h-11z" stroke="none"/>
<path d="M144 3 h8 v9 h-8z" stroke="none"/><path d="M147 8 l2 4" stroke="#555"/>
<path d="M165 4 h10 M167 5 v7 h6 v-7 M168 3 h4" fill="none"/>
</svg>
<div class="a" style="left:752px;top:651px;width:21px;height:6px;background:#535353"></div>
<div class="t" style="left:757px;top:652px;font-size:9px;color:#d8d8d8">3D</div>

<!-- CANVAS -->
<div class="a" style="left:106px;top:187px;width:522px;height:261px;background:#fdfdfd;box-shadow:0 0 0 1px #1c1c1c"></div>
<svg class="a" style="left:106px;top:187px" width="522" height="261"><defs><pattern id="ck" patternUnits="userSpaceOnUse" x="-0.5" y="-0.3" width="12.508" height="12.508"><rect x="6.254" y="0" width="6.254" height="6.254" fill="#cbcbcb"/><rect x="0" y="6.254" width="6.254" height="6.254" fill="#cbcbcb"/></pattern></defs><rect width="522" height="261" fill="url(#ck)"/></svg>
<svg class="a" style="left:0;top:0" width="942" height="657">
<defs>
<linearGradient id="g1" gradientUnits="userSpaceOnUse" x1="0" y1="200" x2="0" y2="440">
<stop offset="0" stop-color="#ff8a10"/>
<stop offset="0.225" stop-color="#e8720f"/>
<stop offset="0.375" stop-color="#cc601a"/>
<stop offset="0.49" stop-color="#a85228"/>
<stop offset="0.6" stop-color="#843e38"/>
<stop offset="0.75" stop-color="#5c2a4e"/>
<stop offset="1" stop-color="#3a1870"/>
</linearGradient>
</defs>
<g fill="url(#g1)">
<circle cx="358" cy="318" r="64.5"/>
<circle cx="174.8" cy="257.4" r="27"/>
<circle cx="287.4" cy="213.6" r="12.8"/>
<circle cx="483.7" cy="243.9" r="21.4"/>
<circle cx="594.8" cy="283.6" r="14.8"/>
<circle cx="131.7" cy="351.3" r="11"/>
<circle cx="208.6" cy="403.7" r="20.3"/>
<circle cx="524.5" cy="376" r="12.6"/>
<circle cx="419.2" cy="425.5" r="14"/>
</g>
</svg>

<!-- RED ANNOTATIONS -->
<svg class="a" style="left:0;top:0" width="942" height="657" fill="none" stroke="#e3101e" stroke-linecap="round">
<ellipse cx="120.5" cy="621.5" rx="31" ry="32.2" stroke-width="4.4" transform="rotate(8 120.5 621.5)"/>
<path d="M238 660 q0 -26 15 -26 q13 0 14 24" stroke-width="3.8"/>
<path d="M266 638 L278 619" stroke-width="3.6"/>
<path d="M267 625 L266 637 L273.5 638.5" stroke-width="3"/>
<path d="M288.5 609 L290 626" stroke-width="4"/>
</svg>
</body></html>
